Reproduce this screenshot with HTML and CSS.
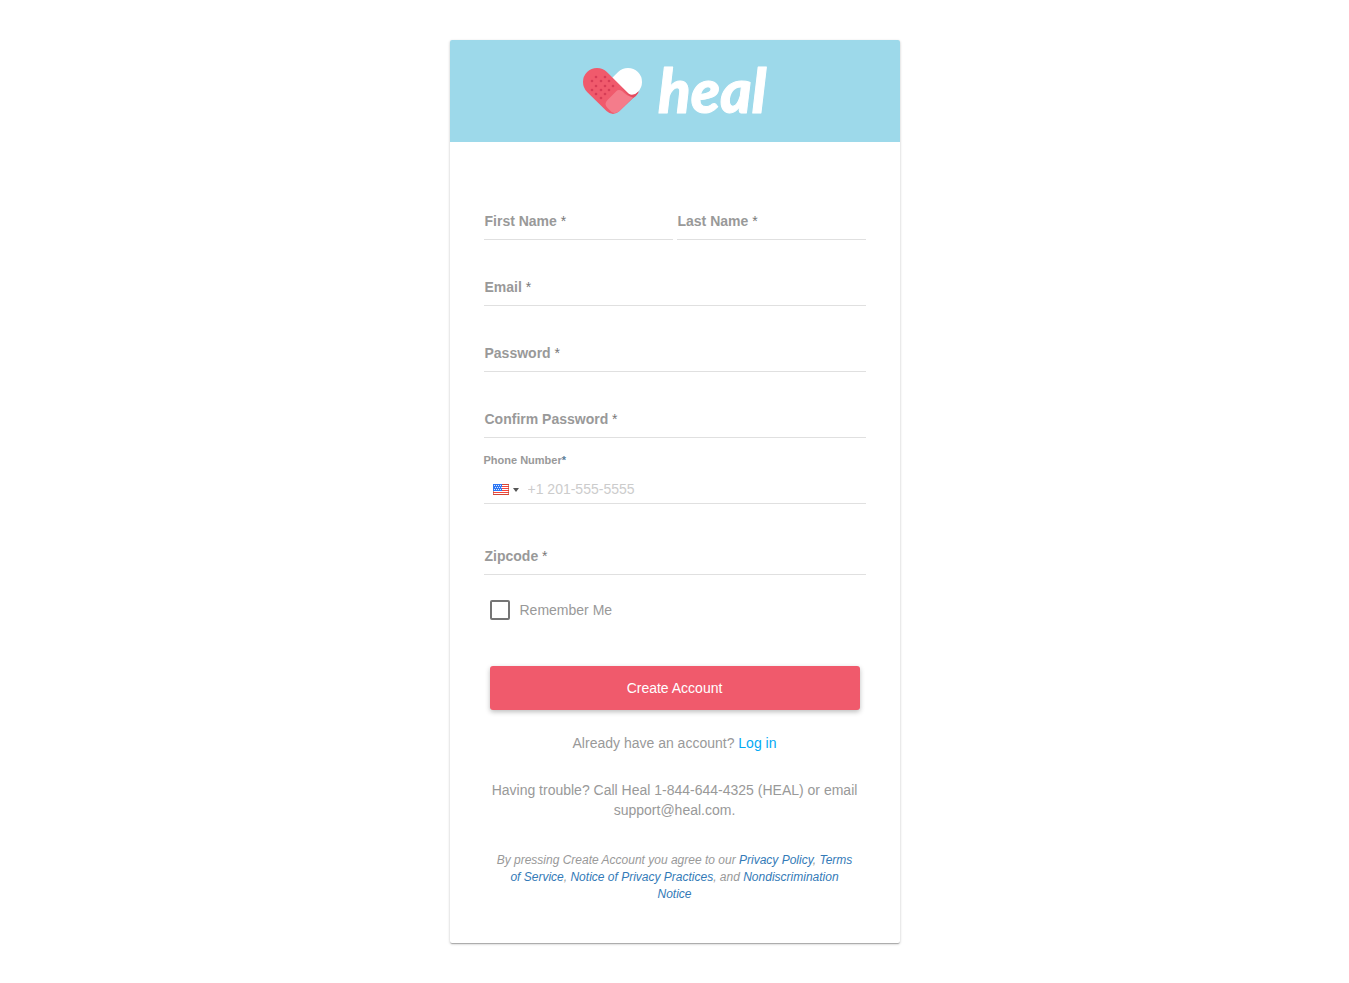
FILE: index.html
```html
<!DOCTYPE html>
<html lang="en">
<head>
<meta charset="utf-8">
<meta name="viewport" content="width=device-width, initial-scale=1">
<title>Heal</title>
<link rel="stylesheet" href="styles.css">
</head>
<body>
<main class="card">
  <header class="brand">
    <svg class="brand-logo" width="188" height="82" viewBox="0 -14 188 82" role="img" aria-label="heal">
      <g transform="translate(2 4)">
        <path d="M35.100 4.100A14 14 0 1 1 54.900 23.900L50 30L26 13Z" fill="#fff"/>
        <path d="M4.100 23.900A14 14 0 0 1 23.900 4.100L46 26Q51 29.500 56 23L54.900 25.500L36.500 43Q30 49 23.500 43Z" fill="#f05a6c"/>
        <path d="M38 19L45 25.500Q50 29 55.500 23.500Q53 30 49 30Q46 28.500 38 19Z" fill="#e34b60"/>
        <path d="M24.500 32L33 23.500Q35.500 21 39 23Q44 28 50 29.500L36.500 43Q32.500 46.500 28.500 44L24.500 40Q20.500 36 24.500 32Z" fill="#f47c8b"/>
        <g fill="#d63d56">
          <circle cx="13" cy="9" r="1.300"/><circle cx="22" cy="9" r="1.300"/><circle cx="9" cy="13" r="1.300"/><circle cx="18" cy="13" r="1.300"/><circle cx="26" cy="13" r="1.300"/><circle cx="13" cy="18" r="1.300"/><circle cx="22" cy="18" r="1.300"/><circle cx="30" cy="18" r="1.300"/><circle cx="9" cy="22" r="1.300"/><circle cx="18" cy="22" r="1.300"/><circle cx="26" cy="22" r="1.300"/><circle cx="13" cy="26" r="1.300"/><circle cx="22" cy="26" r="1.300"/><circle cx="18" cy="30" r="1.300"/>
        </g>
      </g>
      <text class="brand-name" x="77" y="49">heal</text>
    </svg>
  </header>
  <form class="form">
    <div class="row">
      <div class="field"><label for="first">First Name <span class="star">*</span></label><input id="first" type="text"></div>
      <div class="field"><label for="last">Last Name <span class="star">*</span></label><input id="last" type="text"></div>
    </div>
    <div class="field"><label for="email">Email <span class="star">*</span></label><input id="email" type="email"></div>
    <div class="field"><label for="password">Password <span class="star">*</span></label><input id="password" type="password"></div>
    <div class="field"><label for="confirm">Confirm Password <span class="star">*</span></label><input id="confirm" type="password"></div>
    <div class="phone">
      <label for="phone">Phone Number<span class="star">*</span></label>
      <div class="phone-line">
        <button class="country" type="button" aria-label="Country: United States">
          <svg width="16" height="11" viewBox="0 0 16 11" aria-hidden="true">
            <rect width="16" height="11" fill="#fff"/>
            <path d="M0 .5H16M0 2.500H16M0 4.500H16M0 6.500H16M0 8.500H16M0 10.500H16" stroke="#f4443c"/>
            <rect width="9" height="7" fill="#2f78f4"/>
            <path d="M1 1.500H9M2 3.500H9M1 5.500H9" stroke="#dce9ff" stroke-dasharray="1 1"/>
            <path d="M.5 7V10.500H15.500V.5H9" fill="none" stroke="#c3482f" stroke-opacity=".65"/>
          </svg>
          <svg width="6" height="4" viewBox="0 0 6 4" aria-hidden="true"><path d="M0 0H6L3 4Z" fill="#555"/></svg>
        </button>
        <input id="phone" type="tel" placeholder="+1 201-555-5555">
      </div>
    </div>
    <div class="field"><label for="zip">Zipcode <span class="star">*</span></label><input id="zip" type="text"></div>
    <label class="remember"><input type="checkbox">Remember Me</label>
    <button class="submit" type="submit">Create Account</button>
    <p class="signin">Already have an account? <a href="#login">Log in</a></p>
    <p class="help">Having trouble? Call Heal 1-844-644-4325 (HEAL) or email support@heal.com.</p>
    <p class="legal">By pressing Create Account you agree to our <a href="#privacy">Privacy Policy</a>, <a href="#terms">Terms of Service</a>, <a href="#practices">Notice of Privacy Practices</a>, and <a href="#nondiscrimination">Nondiscrimination Notice</a></p>
  </form>
</main>
</body>
</html>
```
FILE: styles.css
```css
* { box-sizing: border-box; }
body {
  margin: 0;
  padding: 40px 16px;
  background: #fff;
  color: #999;
  font: 14px/20px "Liberation Sans", Arial, sans-serif;
}
input, button { font: inherit; }
a { text-decoration: none; }
.card {
  max-width: 450px;
  margin: 0 auto;
  border-radius: 2px;
  background: #fff;
  box-shadow: 0 1px 3px rgba(0, 0, 0, .2), 0 1px 1px rgba(0, 0, 0, .14), 0 2px 1px -1px rgba(0, 0, 0, .12);
}
.brand {
  display: flex;
  justify-content: center;
  padding: 10px 0;
  border-radius: 2px 2px 0 0;
  background: #9dd9ea;
}
.brand-logo { display: block; }
.brand-name {
  font: italic 900 60px Lato, sans-serif;
  fill: #fff;
  stroke: #fff;
  stroke-width: 1px;
  stroke-linejoin: round;
}
.form {
  display: flex;
  flex-direction: column;
  padding: 68px 34px 40px;
}
.row { display: grid; grid-template-columns: 1fr 1fr; gap: 4px; }
.field { display: grid; }
.field + .field, .row + .field { margin-top: 36px; }
.field label, .field input { grid-area: 1 / 1; }
.field label {
  z-index: 1;
  align-self: start;
  padding: 1px;
  font-weight: 700;
  pointer-events: none;
}
.row .field { margin-top: 0; }
.star { font-weight: 400; color: #777; }
.field input, .phone-line {
  width: 100%;
  height: 30px;
  padding: 0;
  border: 0;
  border-bottom: 1px solid #e0e0e0;
  background: transparent;
  outline: 0;
}
.phone { margin-top: 15px; }
.phone label {
  display: block;
  margin-bottom: 7px;
  font-size: 11px;
  font-weight: 700;
  line-height: 14px;
}
.phone .star { font-weight: 700; color: #5b7f99; }
.phone-line { display: flex; align-items: center; }
.country {
  display: flex;
  align-items: center;
  gap: 4px;
  width: 44px;
  padding: 2px 0 0 9px;
  border: 0;
  background: transparent;
}
.phone-line input {
  flex: 1;
  min-width: 0;
  padding: 0;
  border: 0;
  background: transparent;
  outline: 0;
}
.phone-line input::placeholder { color: #ccc; opacity: 1; }
.phone + .field { margin-top: 41px; }
.remember {
  display: flex;
  align-items: center;
  gap: 10px;
  margin: 25px 6px 0;
}
.remember input {
  width: 20px;
  height: 20px;
  margin: 0;
  appearance: none;
  border: 2px solid #757575;
  border-radius: 2px;
}
.remember input:checked { background: #757575; }
.submit {
  height: 44px;
  margin: 46px 6px 0;
  border: 0;
  border-radius: 3px;
  background: #f05a6c;
  color: #fff;
  box-shadow: 0 2px 5px rgba(0, 0, 0, .26);
}
.signin, .help, .legal { margin: 0; text-align: center; }
.signin { margin-top: 23px; }
.signin a { color: #03a9f4; }
.help { margin-top: 27px; }
.legal {
  margin-top: 32px;
  padding: 0 10px;
  font-size: 12px;
  font-style: italic;
  line-height: 17px;
}
.legal a { color: #337ab7; }
```
